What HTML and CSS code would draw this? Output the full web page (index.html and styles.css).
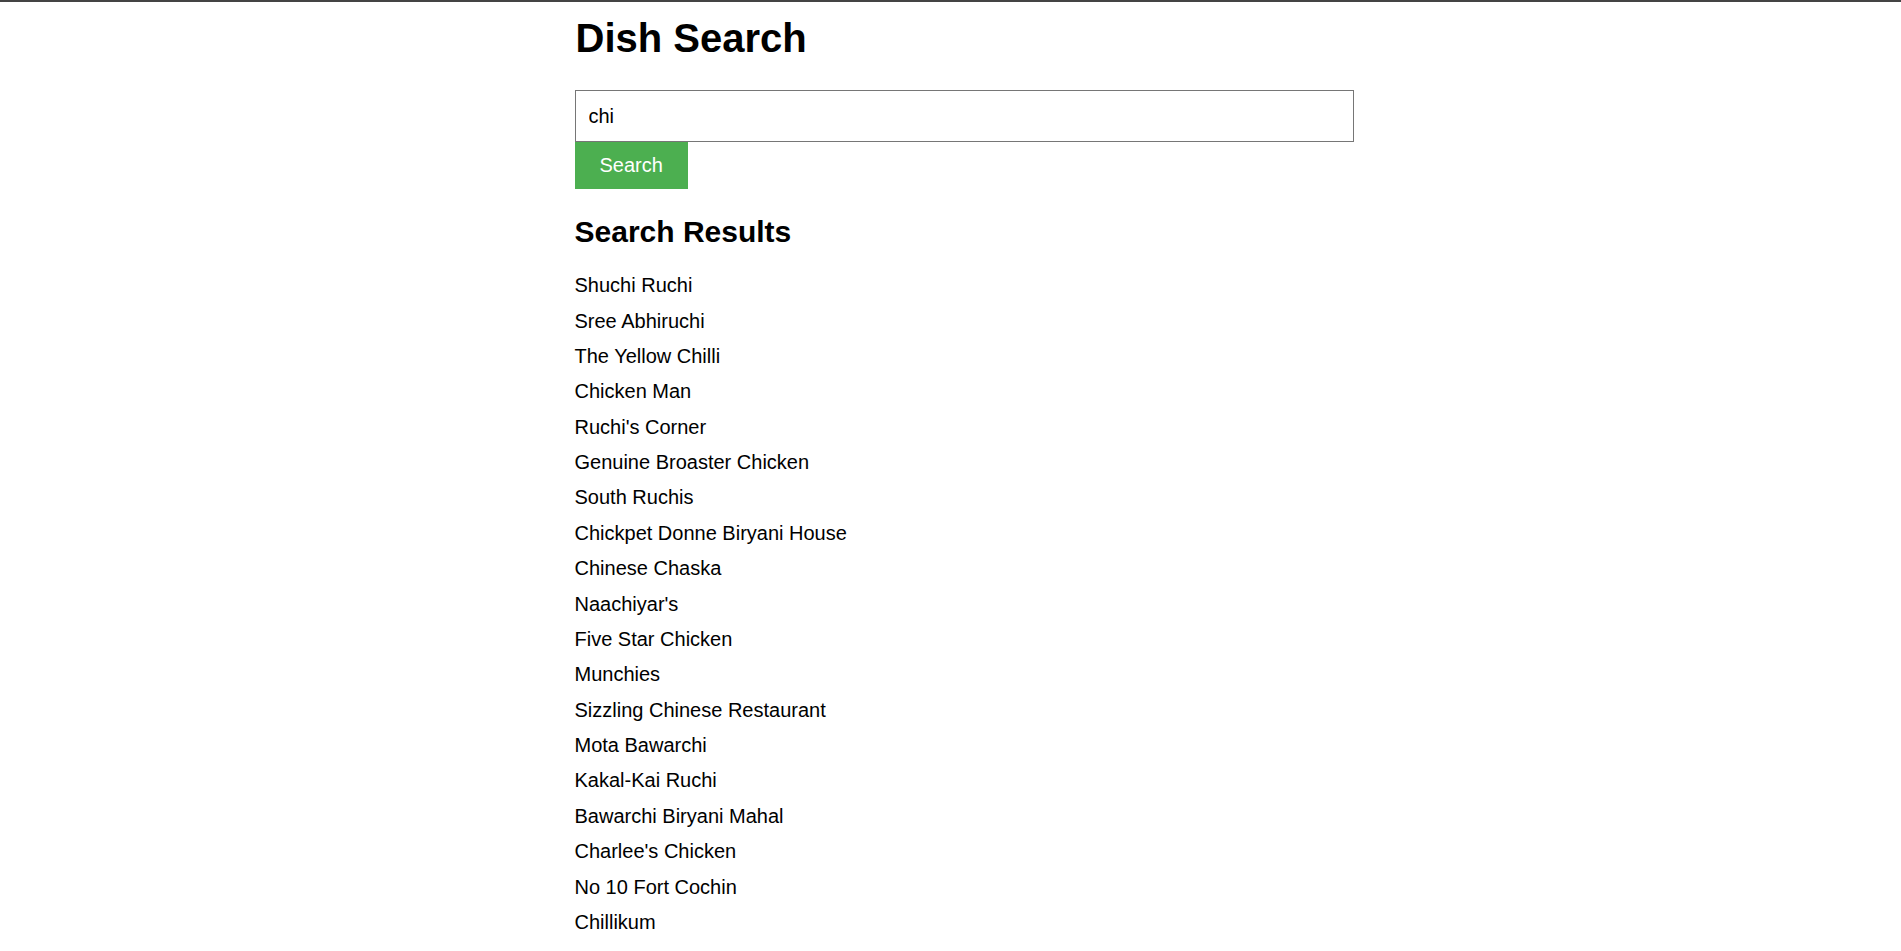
FILE: index.html
```html
<!DOCTYPE html>
<html lang="en">
<head>
<meta charset="utf-8">
<title>Dish Search</title>
<link rel="stylesheet" href="styles.css">
</head>
<body>
<div class="container">
  <h1 class="title">Dish Search</h1>
  <form class="search-form">
    <input class="search-input" type="text" value="chi">
    <button class="search-button" type="button">Search</button>
  </form>
  <h2 class="results-title">Search Results</h2>
  <ul class="results">
    <li class="result">Shuchi Ruchi</li>
    <li class="result">Sree Abhiruchi</li>
    <li class="result">The Yellow Chilli</li>
    <li class="result">Chicken Man</li>
    <li class="result">Ruchi's Corner</li>
    <li class="result">Genuine Broaster Chicken</li>
    <li class="result">South Ruchis</li>
    <li class="result">Chickpet Donne Biryani House</li>
    <li class="result">Chinese Chaska</li>
    <li class="result">Naachiyar's</li>
    <li class="result">Five Star Chicken</li>
    <li class="result">Munchies</li>
    <li class="result">Sizzling Chinese Restaurant</li>
    <li class="result">Mota Bawarchi</li>
    <li class="result">Kakal-Kai Ruchi</li>
    <li class="result">Bawarchi Biryani Mahal</li>
    <li class="result">Charlee's Chicken</li>
    <li class="result">No 10 Fort Cochin</li>
    <li class="result">Chillikum</li>
  </ul>
</div>
</body>
</html>
```

FILE: styles.css
```css
html, body {
  margin: 0;
  padding: 0;
  background: #ffffff;
}

body {
  border-top: 2px solid #444444;
  font-family: "Liberation Sans", Arial, sans-serif;
  font-size: 20px;
  color: #000000;
}

.container {
  width: 750px;
  margin: 0 auto;
  padding-top: 13px;
}

.title {
  margin: 0 0 29px 0;
  font-size: 40px;
  line-height: 46px;
  font-weight: bold;
}

.search-form {
  display: flex;
  flex-direction: column;
  align-items: flex-start;
  margin: 0;
}

.search-input {
  box-sizing: content-box;
  width: 100%;
  height: 24px;
  padding: 13px 14px 13px 13px;
  margin: 0 0 0 -1px;
  border: 1px solid #767676;
  border-radius: 0;
  font-family: "Liberation Sans", Arial, sans-serif;
  font-size: 20px;
  color: #000000;
  outline: none;
}

.search-button {
  margin: 0 0 0 -1px;
  padding: 12px 25px;
  border: none;
  border-radius: 0;
  background: #4caf50;
  color: #ffffff;
  font-family: "Liberation Sans", Arial, sans-serif;
  font-size: 20px;
  line-height: 23px;
  cursor: pointer;
}

.results-title {
  margin: 25px 0 19px -1px;
  font-size: 30px;
  line-height: 35px;
  font-weight: bold;
}

.results {
  list-style: none;
  margin: 0 0 0 -1px;
  padding: 0;
}

.result {
  line-height: 23px;
  padding: 6.2px 0;
}
```
